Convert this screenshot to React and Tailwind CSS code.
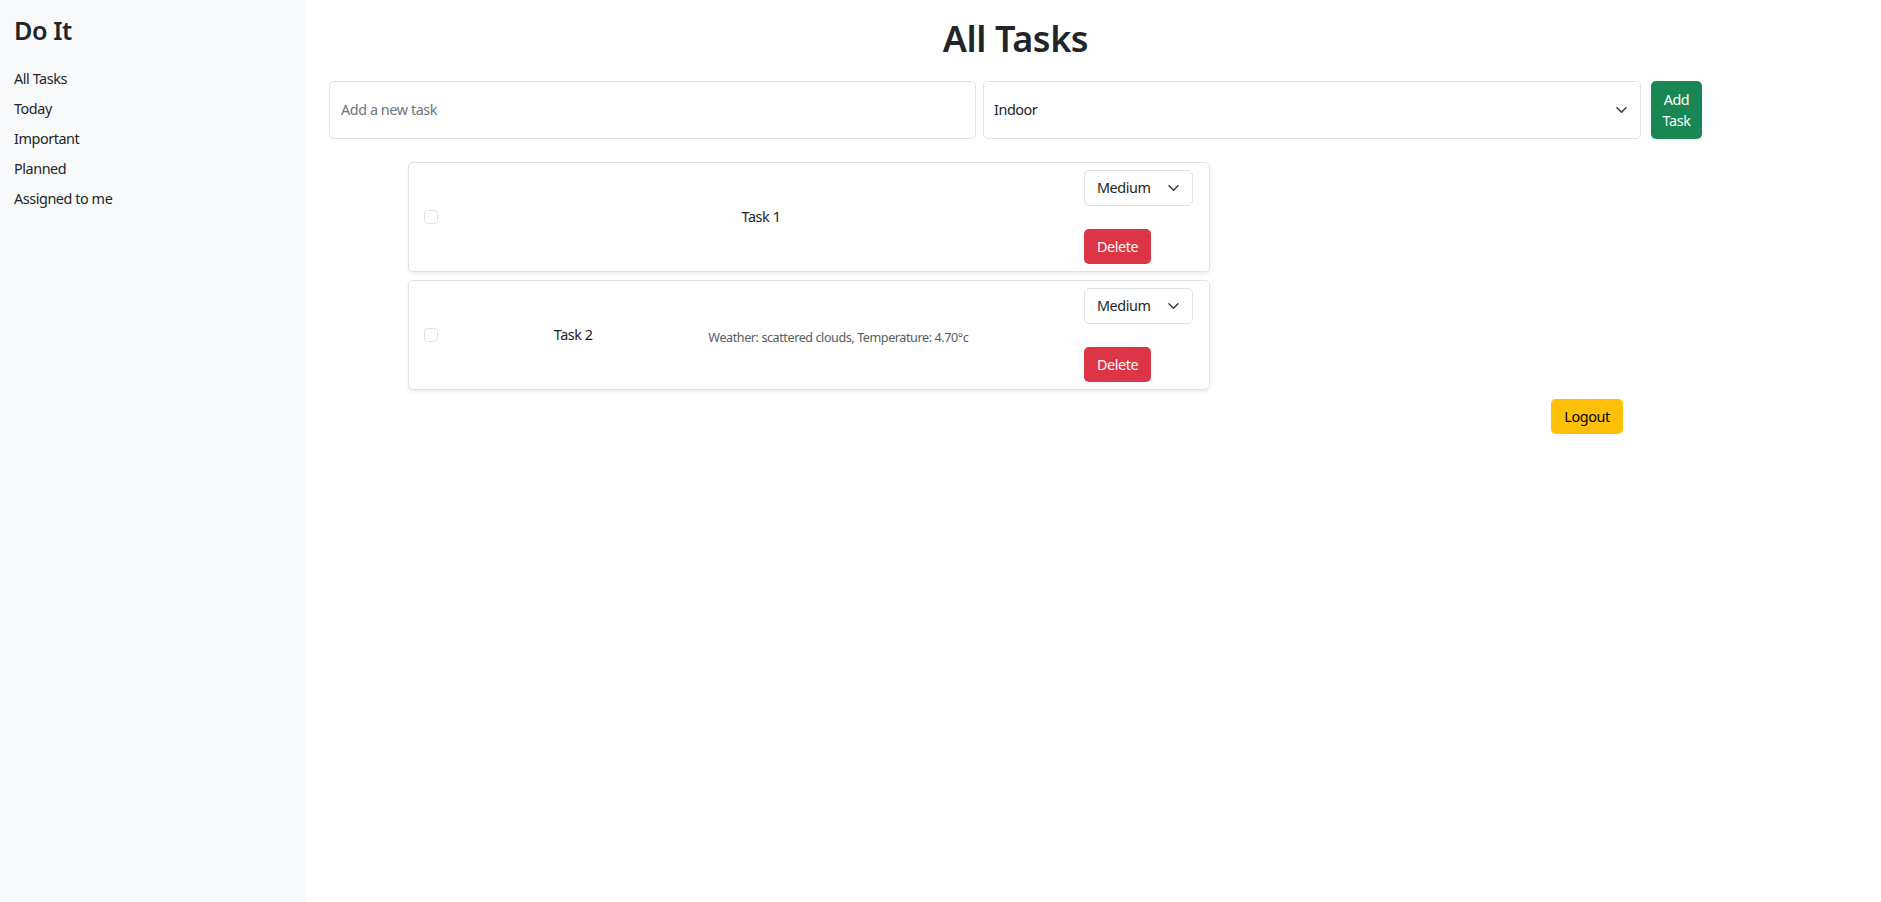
import React from 'react';

const navItems = ['All Tasks', 'Today', 'Important', 'Planned', 'Assigned to me'];

const tasks = [
  { id: 1, title: 'Task 1', weather: null },
  { id: 2, title: 'Task 2', weather: 'Weather: scattered clouds, Temperature: 4.70°c' },
];

const Chevron = ({ className }) => (
  <svg className={className} viewBox="0 0 11 6" fill="none">
    <path d="M1 0.8l4.5 4.4 4.5-4.4" stroke="#343a40" strokeWidth="1.5" strokeLinecap="round" strokeLinejoin="round" />
  </svg>
);

const TaskCard = ({ task }) => (
  <div className="flex h-[110px] items-center rounded-[5px] border border-[#dee2e6] bg-white pl-[15px] pr-[16px] shadow-[0_2px_4px_rgba(0,0,0,0.075)]">
    <input
      type="checkbox"
      className="h-[14px] w-[14px] shrink-0 appearance-none rounded-[3.6px] border border-[#dee2e6] bg-white"
    />
    <div className="flex flex-1 items-center justify-evenly">
      <span>{task.title}</span>
      {task.weather && (
        <small className="mt-[6px] text-[12.6px] text-[#595c5f]">{task.weather}</small>
      )}
    </div>
    <div className="flex w-[109px] shrink-0 flex-col items-start gap-[23px]">
      <div className="relative w-[109px]">
        <select className="h-[36px] w-full appearance-none rounded-[5px] border border-[#dee2e6] bg-white pl-[12px] pr-[30px] text-[14.4px] text-[#212529] outline-none">
          <option>Medium</option>
        </select>
        <Chevron className="pointer-events-none absolute right-[14px] top-1/2 h-[6px] w-[11px] -translate-y-1/2" />
      </div>
      <button className="h-[35px] w-[67px] rounded-[5px] bg-[#dc3545] text-white">Delete</button>
    </div>
  </div>
);

export default function App() {
  return (
    <div className="flex min-h-[902px] font-['Noto_Sans',sans-serif] text-[14.4px] leading-[1.5] tracking-[-0.03em] text-[#212529]">
      {/* Sidebar */}
      <aside className="w-[306px] shrink-0 bg-[#f8f9fa] px-[14px] pt-[15px]">
        <h3 className="text-[25.2px] font-semibold leading-[1.2]">Do It</h3>
        <ul className="mt-[19px]">
          {navItems.map((item) => (
            <li key={item} className="py-[4.2px] leading-[21.6px]">
              {item}
            </li>
          ))}
        </ul>
      </aside>

      {/* Main */}
      <main className="flex-1 bg-white pl-[23px]">
        <div className="w-[1373px]">
          <h1 className="pt-[17px] text-center text-[36px] font-semibold leading-[1.2]">All Tasks</h1>

          <div className="mt-[21px] flex h-[58px] items-stretch">
            <input
              type="text"
              placeholder="Add a new task"
              className="w-[647px] rounded-[5px] border border-[#dee2e6] px-[11px] text-[14.4px] outline-none placeholder:text-[#6c757d]"
            />
            <div className="relative ml-[7px] w-[658px]">
              <select className="h-full w-full appearance-none rounded-[5px] border border-[#dee2e6] bg-white px-[10px] text-[14.4px] text-[#212529] outline-none">
                <option>Indoor</option>
              </select>
              <Chevron className="pointer-events-none absolute right-[14px] top-1/2 h-[6px] w-[11px] -translate-y-1/2" />
            </div>
            <button className="ml-[10px] w-[51px] rounded-[5px] bg-[#198754] text-center leading-[21.6px] text-white">
              Add Task
            </button>
          </div>

          <div className="mt-[23px] px-[79px]">
            <div className="flex w-[802px] flex-col gap-[8px]">
              {tasks.map((task) => (
                <TaskCard key={task.id} task={task} />
              ))}
            </div>
            <div className="mt-[9px] flex justify-end">
              <button className="h-[35px] w-[72px] rounded-[5px] bg-[#ffc107] text-black">Logout</button>
            </div>
          </div>
        </div>
      </main>
    </div>
  );
}
